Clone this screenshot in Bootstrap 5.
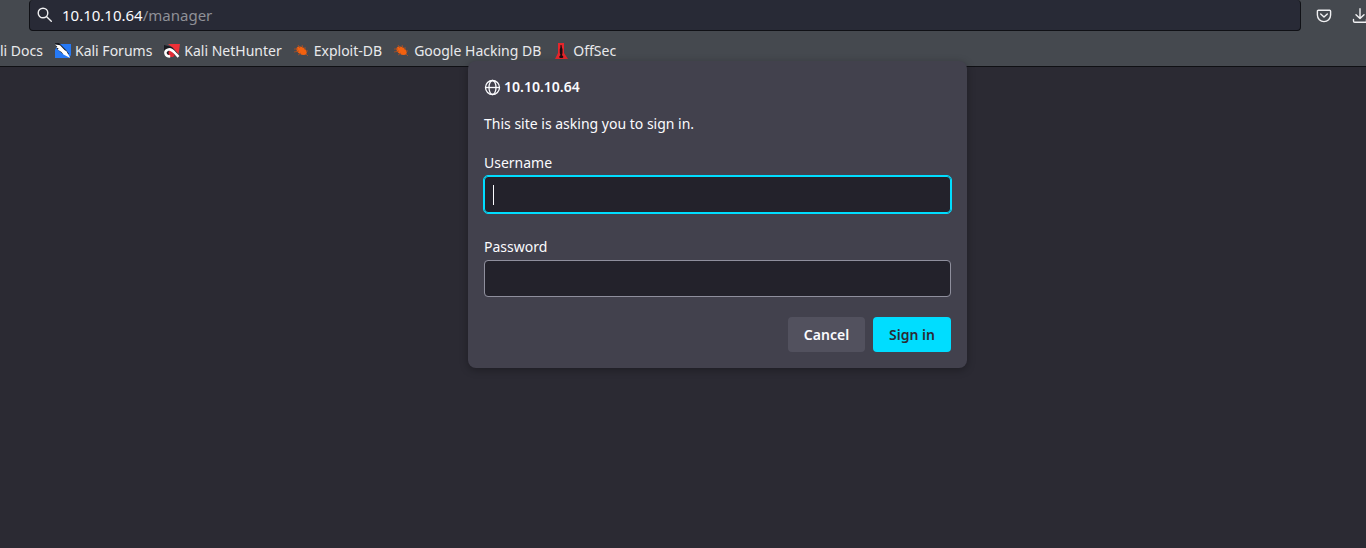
<!DOCTYPE html>
<html lang="en">
<head>
<meta charset="utf-8">
<meta name="viewport" content="width=device-width, initial-scale=1">
<title>10.10.10.64</title>
<link href="https://cdn.jsdelivr.net/npm/bootstrap@5.3.0/dist/css/bootstrap.min.css" rel="stylesheet">
<style>
  body { background: #2b2a33; color: #fbfbfe; font: 14px/20px "Noto Sans", sans-serif; min-height: 100vh; }
  svg { flex: none; display: block; }
  .chrome { background: #45494f; border-bottom: 1px solid #0f1014; }
  .toolbar { padding-left: 29px; height: 31px; }
  .urlbar { background: #282a36; border: 1px solid #101116; border-top: 0; border-radius: 4px; height: 31px; padding-left: 7px; gap: 9px; margin-right: 15px; font-size: 15px; }
  .urlbar .path { color: #8f9097; }
  .tool { width: 16px; height: 16px; margin-right: 20px; color: #f0f0f2; }
  .tool.last { margin-right: -2px; }
  .bookmarks { height: 35px; gap: 12px; padding-top: 5px; }
  .bookmarks a { color: #e9e9ec; gap: 4px; }
  .dialog-box { top: 61px; left: 468px; right: 399px; background: #42414d; border-radius: 8px; padding: 16px; box-shadow: 0 2px 8px rgba(0,0,0,.3); }
  .host { gap: 3px; margin-bottom: 17px; }
  .ask { margin-bottom: 19px; }
  .field label { margin-bottom: 3px; }
  .field input { height: 37px; background-color: #23222b; border: 1px solid #8f8f9d; border-radius: 4px; color: #fbfbfe; padding: 0 8px; }
  .field input:focus { background-color: #23222b; color: #fbfbfe; box-shadow: none; }
  .field .active-input { border-color: #00ddff; outline: 1px solid #00ddff; background-image: linear-gradient(#fbfbfe, #fbfbfe); background-size: 1px 20px; background-repeat: no-repeat; background-position: 8px center; }
  .actions { margin-top: 20px; }
  .actions .btn { height: 35px; border: 0; border-radius: 4px; padding: 0 16px; font-size: 14px; font-weight: 600; line-height: 20px; }
  .cancel, .cancel:hover { background: #52515e; color: #fbfbfe; }
  .signin, .signin:hover { background: #00ddff; color: #2b2a33; }
</style>
</head>
<body class="position-relative overflow-hidden">
<header class="chrome">
  <div class="toolbar d-flex align-items-center">
    <div class="urlbar d-flex align-items-center flex-grow-1">
      <svg width="16" height="16" viewBox="0 0 16 16" fill="none" stroke="#f0f0f2" stroke-width="1.4" stroke-linecap="round"><circle cx="6" cy="6" r="4.8"/><path d="M9.7 9.7 14.3 14.3"/></svg>
      <div>10.10.10.64<span class="path">/manager</span></div>
    </div>
    <svg class="tool" viewBox="0 0 16 16" fill="none" stroke="currentColor" stroke-width="1.4" stroke-linecap="round" stroke-linejoin="round"><path d="M2.4 2.2H13.6Q14.6 2.2 14.6 3.2V7A6.6 6.6 0 0 1 1.4 7V3.2Q1.4 2.2 2.4 2.2ZM4.7 5.9 8 9 11.3 5.9"/></svg>
    <svg class="tool last" viewBox="0 0 16 16" fill="none" stroke="currentColor" stroke-width="1.4" stroke-linecap="round" stroke-linejoin="round"><path d="M8 .8V10.5M4 6.7 8 10.6 12 6.7M1.5 11.5V13Q1.5 14.3 2.8 14.3H13.2Q14.5 14.3 14.5 13V11.5"/></svg>
  </div>
  <nav class="bookmarks d-flex align-items-center text-nowrap">
    <a href="#" class="d-flex align-items-center text-decoration-none">li Docs</a>
    <a href="#" class="d-flex align-items-center text-decoration-none">
      <svg width="16" height="16" viewBox="0 0 16 16"><path fill="#2679f5" d="M3 1H16V12L14 15H0V7Z"/><path fill="#17191f" d="M0 0H4L11 7 14 11 8 11 2 6Z"/><path fill="#fff" d="M0 1.5 5 2.3 9.5 7 11.5 8.2 15.2 15 8.5 11.5 6.5 9 2.5 6.4 3.8 5.7 1 4.2 2.5 3.9Z"/></svg>Kali Forums</a>
    <a href="#" class="d-flex align-items-center text-decoration-none">
      <svg width="16" height="16" viewBox="0 0 16 16"><path fill="#ef3038" d="M4 1H16L14.5 11 10 6Z"/><path fill="#191a20" d="M0 2 8 4 13 10 10 13H4L0 10Z"/><path fill="#e02b36" d="M4.5 8.5 7 7.5 11 12 9 14H5Z"/><path fill="none" stroke="#fff" stroke-width="2.5" d="M6.2 13.6C.4 13.5 .2 8 3.8 6.7 8 5 10 9.5 14.5 13.8"/></svg>Kali NetHunter</a>
    <a href="#" class="d-flex align-items-center text-decoration-none">
      <svg width="16" height="16" viewBox="0 0 16 16"><ellipse cx="7.5" cy="8" rx="5.7" ry="3.6" transform="rotate(32 8 8)" fill="#f2610f"/><path d="M4 2 6 5M8 2 9 5M11 4 11 7M0 6H4M0 9 5 8M4 12 7 10M12 8 14 8M12 11 14 13" stroke="#a84f25" stroke-width=".9"/></svg>Exploit-DB</a>
    <a href="#" class="d-flex align-items-center text-decoration-none">
      <svg width="16" height="16" viewBox="0 0 16 16"><ellipse cx="7.5" cy="8" rx="5.7" ry="3.6" transform="rotate(32 8 8)" fill="#f2610f"/><path d="M4 2 6 5M8 2 9 5M11 4 11 7M0 6H4M0 9 5 8M4 12 7 10M12 8 14 8M12 11 14 13" stroke="#a84f25" stroke-width=".9"/></svg>Google Hacking DB</a>
    <a href="#" class="d-flex align-items-center text-decoration-none">
      <svg width="16" height="16" viewBox="0 0 16 16"><path fill="#e5262b" d="M5 0H11V10L15 16H2L5 10Z"/><path fill="#1c0b10" d="M7.5 2H8.5L9 5 9.5 6V10L9 12 10.5 14 9.5 15H7L6 14 7.5 12 6.8 10V6L7.3 5Z"/></svg>OffSec</a>
  </nav>
</header>
<main>
  <form class="dialog-box position-absolute" role="dialog" aria-labelledby="host">
    <div class="host d-flex align-items-center fw-semibold">
      <svg width="17" height="17" viewBox="0 0 17 17" fill="none" stroke="#fbfbfe" stroke-width="1.3"><circle cx="8.5" cy="8.5" r="7"/><ellipse cx="8.5" cy="8.5" rx="3.5" ry="7"/><path d="M1.5 8.5H15.5"/></svg>
      <span id="host">10.10.10.64</span>
    </div>
    <p class="ask">This site is asking you to sign in.</p>
    <div class="field mb-4">
      <label for="user" class="d-block">Username</label>
      <input id="user" type="text" class="form-control active-input">
    </div>
    <div class="field">
      <label for="pass" class="d-block">Password</label>
      <input id="pass" type="password" class="form-control">
    </div>
    <div class="actions d-flex justify-content-end gap-2">
      <button type="button" class="btn cancel">Cancel</button>
      <button type="button" class="btn signin">Sign in</button>
    </div>
  </form>
</main>
</body>
</html>
